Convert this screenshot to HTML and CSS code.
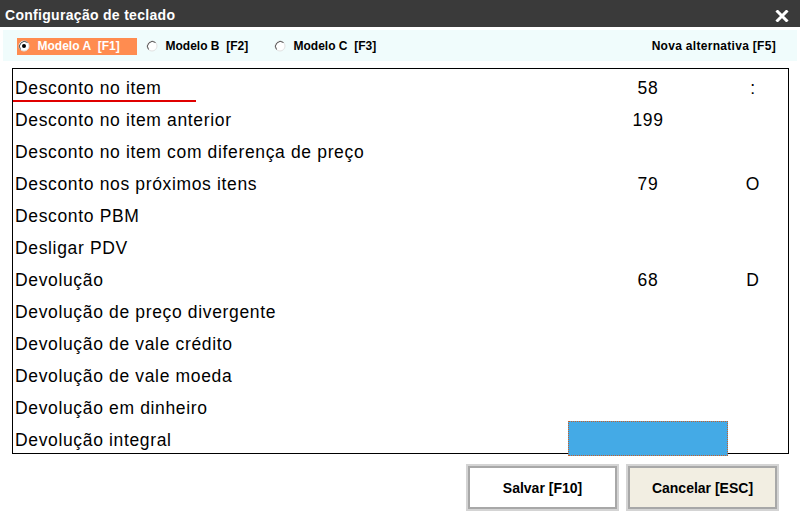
FILE: index.html
```html
<!DOCTYPE html>
<html lang="pt">
  <head>
    <meta charset="UTF-8" />
    <meta name="viewport" content="width=device-width, initial-scale=1.0" />
    <title>Configuração de teclado</title>
    <link rel="stylesheet" href="styles.css">
  </head>
  <body>
    <div id="titlebar">
      <span id="title">Configuração de teclado</span>
      <svg class="close" width="14" height="12" viewBox="0 0 14 12">
        <path d="M1.5 0.5 L12.5 11.5 M12.5 0.5 L1.5 11.5" stroke="#fff" stroke-width="3" />
      </svg>
    </div>

    <div id="toolbar">
      <div class="model selected">
        <svg class="radio" width="12" height="12" viewBox="0 0 12 12">
          <circle cx="6" cy="6" r="5" fill="#fff" stroke="#e2e2e2" />
          <path d="M2.5 9.5 A5 5 0 0 1 9.5 2.5" fill="none" stroke="#505050" />
          <circle cx="6" cy="6" r="2" fill="#000" />
        </svg>
        <span>Modelo A&nbsp;&nbsp;[F1]</span>
      </div>
      <div class="model">
        <svg class="radio" width="12" height="12" viewBox="0 0 12 12">
          <circle cx="6" cy="6" r="5" fill="#fff" stroke="#e2e2e2" />
          <path d="M2.5 9.5 A5 5 0 0 1 9.5 2.5" fill="none" stroke="#505050" />
        </svg>
        <span>Modelo B&nbsp;&nbsp;[F2]</span>
      </div>
      <div class="model">
        <svg class="radio" width="12" height="12" viewBox="0 0 12 12">
          <circle cx="6" cy="6" r="5" fill="#fff" stroke="#e2e2e2" />
          <path d="M2.5 9.5 A5 5 0 0 1 9.5 2.5" fill="none" stroke="#505050" />
        </svg>
        <span>Modelo C&nbsp;&nbsp;[F3]</span>
      </div>
      <span id="nova">Nova alternativa [F5]</span>
    </div>

    <div id="list">
      <div class="row"><div class="name current">Desconto no item</div><div class="key">58</div><div class="letter">:</div></div>
      <div class="row"><div class="name">Desconto no item anterior</div><div class="key">199</div><div class="letter"></div></div>
      <div class="row"><div class="name">Desconto no item com diferença de preço</div><div class="key"></div><div class="letter"></div></div>
      <div class="row"><div class="name">Desconto nos próximos itens</div><div class="key">79</div><div class="letter">O</div></div>
      <div class="row"><div class="name">Desconto PBM</div><div class="key"></div><div class="letter"></div></div>
      <div class="row"><div class="name">Desligar PDV</div><div class="key"></div><div class="letter"></div></div>
      <div class="row"><div class="name">Devolução</div><div class="key">68</div><div class="letter">D</div></div>
      <div class="row"><div class="name">Devolução de preço divergente</div><div class="key"></div><div class="letter"></div></div>
      <div class="row"><div class="name">Devolução de vale crédito</div><div class="key"></div><div class="letter"></div></div>
      <div class="row"><div class="name">Devolução de vale moeda</div><div class="key"></div><div class="letter"></div></div>
      <div class="row"><div class="name">Devolução em dinheiro</div><div class="key"></div><div class="letter"></div></div>
      <div class="row"><div class="name">Devolução integral</div><div class="key editing"></div><div class="letter"></div></div>
    </div>

    <div id="buttons">
      <button class="btn save">Salvar [F10]</button>
      <button class="btn cancel">Cancelar [ESC]</button>
    </div>
  </body>
</html>
```

FILE: styles.css
```css
* {
  margin: 0;
  padding: 0;
  box-sizing: border-box;
  font-family: "Liberation Sans", Arial, sans-serif;
}
body {
  background-color: #ffffff;
  width: 800px;
  height: 522px;
  overflow: hidden;
}
#titlebar {
  height: 27px;
  background-color: #3a3a3a;
  color: white;
  display: flex;
  align-items: center;
  justify-content: space-between;
  padding: 0 11px 0 5px;
}
#title {
  font-size: 14px;
  font-weight: bold;
  letter-spacing: 0.3px;
  padding-top: 2px;
}
.close {
  display: block;
  margin-top: 4px;
}
#toolbar {
  margin: 3px 3px 0 3px;
  height: 31px;
  background-color: #f0fcfc;
  display: flex;
  align-items: center;
  gap: 8px;
  padding: 1px 21px 0 14px;
}
.model {
  width: 120px;
  height: 17px;
  display: flex;
  align-items: center;
  gap: 8px;
  font-size: 12px;
  font-weight: bold;
  color: black;
}
.model.selected {
  background-color: #ff8c50;
  color: white;
}
.radio {
  display: block;
  flex-shrink: 0;
  margin-left: 0.5px;
}
#nova {
  margin-left: auto;
  font-size: 12px;
  font-weight: bold;
  letter-spacing: 0.3px;
}
#list {
  margin: 7px 0 0 12px;
  width: 777px;
  border: 1px solid #000;
}
.row {
  display: grid;
  grid-template-columns: 555px 160px 50px;
  height: 32px;
  font-size: 17.5px;
  letter-spacing: 0.65px;
  line-height: 32px;
  color: #000;
}
.row > div {
  padding-top: 3px;
}
.name {
  padding-left: 2px;
  white-space: nowrap;
  position: relative;
}
.name.current::after {
  content: "";
  position: absolute;
  left: 0;
  bottom: 2px;
  width: 183px;
  height: 2px;
  background-color: #e00000;
}
.key,
.letter {
  text-align: center;
}
.key.editing {
  background-color: #44aae6;
  border: 1px dotted #c8602a;
}
#buttons {
  display: flex;
  justify-content: flex-end;
  gap: 7px;
  padding: 10px 21px 0 0;
}
.btn {
  width: 153px;
  height: 47px;
  border: 2px solid #d4d4d4;
  box-shadow: 0 0 0 2px #a8a8a8 inset;
  font-size: 14px;
  font-weight: bold;
  color: #000;
  background-color: white;
}
.btn.cancel {
  background-color: #f2eee2;
}
```
